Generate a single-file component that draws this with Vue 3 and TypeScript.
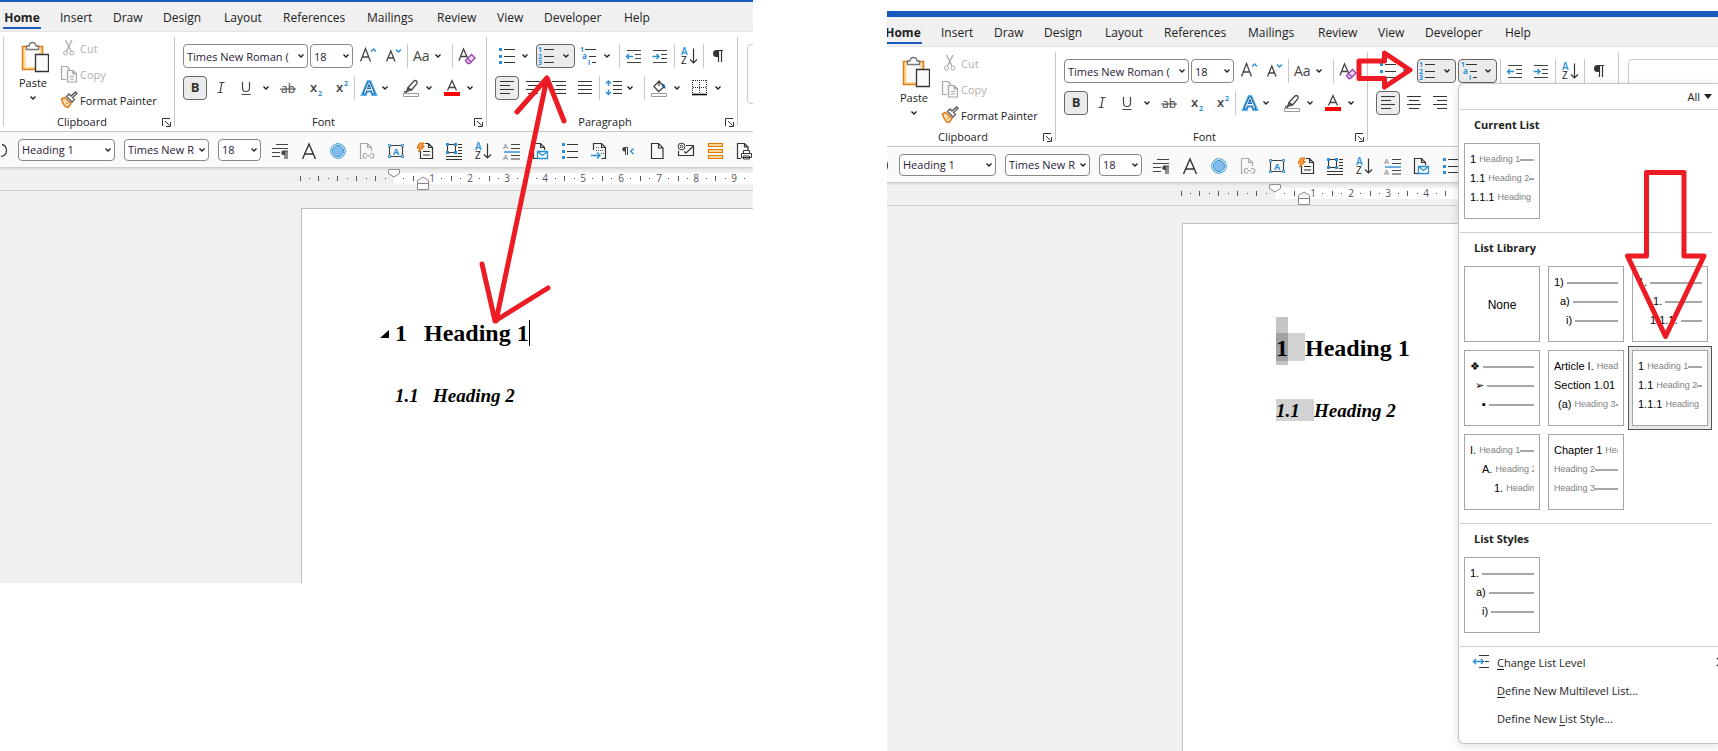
<script setup lang="ts">
interface Tool {
  icon?: string
  label?: string
  width?: number
  gap?: number
  kind?: 'sep' | 'caret'
  pressed?: boolean
}
interface Split { icon: string; label: string; pressed: boolean }
interface Pane { id: string; menuOpen: boolean }
interface Row { indent: number; label: string; text?: string; line?: boolean }
interface Thumb { name: string; rows: Row[]; selected?: boolean }

const panes: Pane[] = [
  { id: 'before', menuOpen: false },
  { id: 'after', menuOpen: true },
]

const tabs = ['Home', 'Insert', 'Draw', 'Design', 'Layout', 'References', 'Mailings', 'Review', 'View', 'Developer', 'Help']

const sep = (gap = 2): Tool => ({ kind: 'sep', gap })
const caret = (label: string, gap = 0): Tool => ({ kind: 'caret', label, gap, width: 8 })
const tool = (icon: string, label: string, gap = 2, width = 24, pressed = false): Tool => ({ icon, label, gap, width, pressed })

const fontTop: Tool[] = [
  tool('grow', 'Increase Font Size', 2, 26),
  tool('shrink', 'Decrease Font Size', 0, 26),
  sep(0),
  tool('case', 'Change Case'),
  caret('Change Case options'),
  sep(10),
  tool('clear', 'Clear Formatting'),
]
const fontBottom: Tool[] = [
  tool('bold', 'Bold', 0, 24, true),
  tool('italic', 'Italic'),
  tool('underline', 'Underline', 1),
  caret('Underline options', 4),
  tool('strike', 'Strikethrough', 4, 28),
  tool('sub', 'Subscript', 0, 28),
  tool('sup', 'Superscript', 0),
  sep(0),
  tool('effects', 'Text Effects'),
  caret('Text Effects options'),
  tool('marker', 'Highlight Color', 10),
  caret('Highlight options', 2),
  tool('fontcolor', 'Font Color', 7),
  caret('Font Color options', 2),
]
const paraTop: Tool[] = [
  sep(1),
  tool('outdent', 'Decrease Indent'),
  tool('indent', 'Increase Indent'),
  sep(),
  tool('sort', 'Sort'),
  sep(),
  tool('pilcrow', 'Show Marks'),
]
const paraBottom: Tool[] = [
  tool('left', 'Align Left', 0, 24, true),
  tool('center', 'Center'),
  tool('right', 'Align Right'),
  tool('justify', 'Justify'),
  sep(),
  tool('spacing', 'Line Spacing'),
  caret('Line Spacing options'),
  sep(10),
  tool('shading', 'Shading'),
  caret('Shading options', 2),
  tool('borders', 'Borders', 7),
  caret('Borders options', 2),
]
const quick = ['marks', 'bigA', 'circle', 'link', 'frame', 'flash', 'wrap', 'sort', 'spread', 'mail', 'bullets', 'export', 'rtl', 'page', 'envelope', 'stack', 'print']

const splits = (open: boolean): Split[] => [
  { icon: 'bullets', label: 'Bullets', pressed: false },
  { icon: 'numbers', label: 'Numbering', pressed: true },
  { icon: 'multi', label: 'Multilevel List', pressed: open },
]

const box = (t: Tool) => ({ width: t.width ? `${t.width}px` : undefined, marginLeft: `${t.gap ?? 0}px` })

const headingRows: Row[] = [
  { indent: 0, label: '1', text: 'Heading 1', line: true },
  { indent: 0, label: '1.1', text: 'Heading 2', line: true },
  { indent: 0, label: '1.1.1', text: 'Heading 3' },
]
const current: Thumb[] = [{ name: 'Current list', rows: headingRows }]
const library: Thumb[] = [
  { name: 'None', rows: [] },
  { name: 'Parentheses', rows: [{ indent: 0, label: '1)', line: true }, { indent: 6, label: 'a)', line: true }, { indent: 12, label: 'i)', line: true }] },
  { name: 'Decimal', rows: [{ indent: 0, label: '1.', line: true }, { indent: 15, label: '1.', line: true }, { indent: 12, label: '1.1.1.', line: true }] },
  { name: 'Symbols', rows: [{ indent: 0, label: '❖', line: true }, { indent: 5, label: '➢', line: true }, { indent: 12, label: '▪', line: true }] },
  { name: 'Article', rows: [{ indent: 0, label: 'Article I.', text: 'Heading 1' }, { indent: 0, label: 'Section 1.01', text: 'Heading 2' }, { indent: 4, label: '(a)', text: 'Heading 3', line: true }] },
  { name: 'Headings', rows: headingRows, selected: true },
  { name: 'Outline', rows: [{ indent: 0, label: 'I.', text: 'Heading 1', line: true }, { indent: 12, label: 'A.', text: 'Heading 2' }, { indent: 24, label: '1.', text: 'Heading 3' }] },
  { name: 'Chapter', rows: [{ indent: 0, label: 'Chapter 1', text: 'Heading 1' }, { indent: 0, label: '', text: 'Heading 2', line: true }, { indent: 0, label: '', text: 'Heading 3', line: true }] },
]
const styles: Thumb[] = [
  { name: 'List style', rows: [{ indent: 0, label: '1.', line: true }, { indent: 6, label: 'a)', line: true }, { indent: 12, label: 'i)', line: true }] },
]
const sections = [
  { title: 'Current List', thumbs: current },
  { title: 'List Library', thumbs: library },
  { title: 'List Styles', thumbs: styles },
]

/* Ruler marks: one every quarter of a centimetre, measured from the margin. */
const ORIGIN = 394
const QUARTER = 9.45
const marks = (last: number) => Array.from({ length: last + 10 }, (_, k) => k - 10)
  .filter((i) => i !== 0)
  .map((i) => ({
    x: Math.round(ORIGIN + QUARTER * i),
    num: i > 0 && i % 4 === 0 ? i / 4 : 0,
    dot: i % 2 !== 0,
  }))
</script>

<template>
  <svg class="defs" aria-hidden="true">
    <symbol id="chev" viewBox="0 0 8 8"><path d="M1.500 2.500 4 5l2.500-2.500" fill="none" stroke="#222" stroke-width="1.400" /></symbol>
    <symbol id="grow" viewBox="0 0 20 20"><path d="M2.500 15.500 7.500 2.500 12.500 15.500M4.300 11h6.400" fill="none" stroke="#444" stroke-width="1.300" /><path d="M13 5.500 15.500 3 18 5.500" fill="none" stroke="#2b8fd6" stroke-width="1.400" /></symbol>
    <symbol id="shrink" viewBox="0 0 20 20"><path d="M2.500 15.500 6.800 5 11 15.500M4 12h5.500" fill="none" stroke="#444" stroke-width="1.300" /><path d="M12 3.500 14.500 6 17 3.500" fill="none" stroke="#2b8fd6" stroke-width="1.400" /></symbol>
    <symbol id="case" viewBox="0 0 20 20"><text x="1" y="15" font-size="14" fill="#444">Aa</text></symbol>
    <symbol id="clear" viewBox="0 0 20 20"><path d="M2 14.500 6.500 3 11 13M3.800 10.500h5.500" fill="none" stroke="#444" stroke-width="1.300" /><path d="m8.500 14.500 6-6 3.500 3.500-5.500 5.500h-1.500zM10.500 12.500l3.500 3.500" fill="#f1def5" stroke="#9b3fb0" stroke-width="1.400" /></symbol>
    <symbol id="bold" viewBox="0 0 20 20"><text x="10" y="14" font-size="13" font-weight="700" text-anchor="middle" fill="#333">B</text></symbol>
    <symbol id="italic" viewBox="0 0 20 20"><path d="M8.500 4.500h5M6.500 14.500h5M11 4.500 9 14.500" fill="none" stroke="#444" stroke-width="1.200" /></symbol>
    <symbol id="underline" viewBox="0 0 20 20"><path d="M6.500 4v6a3.500 3.500 0 0 0 7 0V4M5.500 16.500h9" fill="none" stroke="#444" stroke-width="1.200" /></symbol>
    <symbol id="strike" viewBox="0 0 20 20"><text x="10" y="15" font-size="12" text-anchor="middle" fill="#444">ab</text><path d="M2 11h16" stroke="#444" /></symbol>
    <symbol id="sub" viewBox="0 0 20 20"><text x="4" y="14" font-size="13" font-weight="600" fill="#444">x</text><text x="12" y="18" font-size="7" font-weight="700" fill="#2b8fd6">2</text></symbol>
    <symbol id="sup" viewBox="0 0 20 20"><text x="4" y="14" font-size="13" font-weight="600" fill="#444">x</text><text x="12" y="8" font-size="7" font-weight="700" fill="#2b8fd6">2</text></symbol>
    <symbol id="effects" viewBox="0 0 20 20"><path d="M3.500 16.500 9 3.500h2l5.500 13h-3l-1.200-3.500H7.700L6.500 16.500z" fill="#fff" stroke="#5db4ec" stroke-width="3" /><path d="M4 16 9 4h2l5 12h-2.500l-1.200-3H7.700L6.500 16zM8.500 10.500h3L10 6.500z" fill="#fff" stroke="#1266ad" stroke-width="1.100" /></symbol>
    <symbol id="marker" viewBox="0 0 20 20"><path d="m7 9.500 6-6.500q1.500-1 2.700.200 1 1.300 0 2.600L10.500 12zM7 9.500l-1.500 4 5-1.500M3 14h3" fill="none" stroke="#444" stroke-width="1.300" /><path d="m7 10-1.500 3.500L10 12z" fill="#555" /><path d="M2.500 15.500h15v3h-15z" fill="#fff" stroke="#999" /></symbol>
    <symbol id="fontcolor" viewBox="0 0 20 20"><path d="M5.500 12.500 10 2.500l4.500 10M7 9.500h6" fill="none" stroke="#444" stroke-width="1.300" /><path d="M2 14h16v4H2z" fill="#f00" /></symbol>
    <symbol id="bullets" viewBox="0 0 20 20"><path d="M2 2h3v3H2zM2 9h3v3H2zM2 15h3v3H2z" fill="#2b8fd6" /><path d="M7 3.500h11M7 10.500h11M7 16.500h11" stroke="#333" stroke-width="1.200" /></symbol>
    <symbol id="numbers" viewBox="0 0 20 20"><g font-size="7" font-weight="700" fill="#2b8fd6"><text x="0" y="6">1</text><text x="0" y="13">2</text><text x="0" y="19">3</text></g><path d="M6 3.500h10M6 10.500h10M6 16.500h10" stroke="#333" stroke-width="1.200" /></symbol>
    <symbol id="multi" viewBox="0 0 20 20"><g font-size="7" font-weight="700" fill="#2b8fd6"><text x="1" y="6">1</text><text x="3" y="13" font-size="8">a</text><text x="9" y="19">i</text></g><path d="M6 3.500h11M10 10.500h7M13 16.500h4" stroke="#333" stroke-width="1.200" /></symbol>
    <symbol id="outdent" viewBox="0 0 20 20"><path d="M3 4.500h14M11 8.500h6M11 12.500h6M3 16.500h14" stroke="#444" stroke-width="1.200" /><path d="M2.500 10.500H9M5 8l-2.500 2.500L5 13" fill="none" stroke="#2b8fd6" stroke-width="1.400" /></symbol>
    <symbol id="indent" viewBox="0 0 20 20"><path d="M3 4.500h14M11 8.500h6M11 12.500h6M3 16.500h14" stroke="#444" stroke-width="1.200" /><path d="M2.500 10.500H9M6.500 8 9 10.500 6.500 13" fill="none" stroke="#2b8fd6" stroke-width="1.400" /></symbol>
    <symbol id="sort" viewBox="0 0 20 20"><text x="2" y="9" font-size="10" font-weight="600" fill="#2b8fd6">A</text><text x="2" y="18" font-size="10" fill="#222">Z</text><path d="M14.500 2.500v14.500M11 13.500l3.500 3.500 3.500-3.500" fill="none" stroke="#333" stroke-width="1.200" /></symbol>
    <symbol id="pilcrow" viewBox="0 0 20 20"><path d="M15 4.500H9M10.500 4v12M13.500 4v12" fill="none" stroke="#333" stroke-width="1.200" /><path d="M10 4H8.500a3.500 3.500 0 0 0 0 7H10z" fill="#333" /></symbol>
    <symbol id="left" viewBox="0 0 20 20"><path d="M3 3.500h14M3 7.500h10M3 11.500h14M3 15.500h10" stroke="#333" stroke-width="1.200" /></symbol>
    <symbol id="center" viewBox="0 0 20 20"><path d="M3 3.500h14M5 7.500h10M3 11.500h14M5 15.500h10" stroke="#333" stroke-width="1.200" /></symbol>
    <symbol id="right" viewBox="0 0 20 20"><path d="M3 3.500h14M7 7.500h10M3 11.500h14M7 15.500h10" stroke="#333" stroke-width="1.200" /></symbol>
    <symbol id="justify" viewBox="0 0 20 20"><path d="M3 3.500h14M3 7.500h14M3 11.500h14M3 15.500h14" stroke="#333" stroke-width="1.200" /></symbol>
    <symbol id="spacing" viewBox="0 0 20 20"><path d="M9 3.500h9M9 7.500h9M9 11.500h9M9 15.500h9" stroke="#333" stroke-width="1.200" /><path d="M4.500 3v5M4.500 11.500v5M2 5.500 4.500 3 7 5.500M2 14l2.500 2.500L7 14" fill="none" stroke="#2b8fd6" stroke-width="1.400" /></symbol>
    <symbol id="shading" viewBox="0 0 20 20"><path d="m5 8.500 5-5.500 5 6-5.500 4.500zM10 3v5" fill="none" stroke="#444" stroke-width="1.300" /><path d="M13 5.500q3.500 0 3.500 6-1.500-3-3.500-3z" fill="#1266ad" /><path d="M2.500 15.500h15v3h-15z" fill="#fff" stroke="#999" /></symbol>
    <symbol id="borders" viewBox="0 0 20 20"><path d="M3 2.500h14M3 9.500h14M2.500 2v14M9.500 2v14M16.500 2v14" stroke="#333" stroke-dasharray="1 1" /><path d="M2 16.500h15" stroke="#000" stroke-width="1.600" /></symbol>
    <symbol id="marks" viewBox="0 0 20 20"><path d="M6 3.500h12M2 7.500h16M2 11.500h8M2 15.500h8M18 10h-3.500M15 10v8M17 10v8" stroke="#444" stroke-width="1.200" /><path d="M15 9.500h-1.500a2 2 0 0 0 0 4.500H15z" fill="#444" /></symbol>
    <symbol id="bigA" viewBox="0 0 20 20"><path d="M3.500 18 10 3l6.500 15M6 13h8" fill="none" stroke="#333" stroke-width="1.400" /></symbol>
    <symbol id="circle" viewBox="0 0 20 20"><circle cx="10" cy="10" r="7.300" fill="#fff" stroke="#2b8fd6" stroke-width="1" /><circle cx="10" cy="10" r="5.500" fill="#84bdee" stroke="#2b8fd6" /></symbol>
    <symbol id="link" viewBox="0 0 20 20"><path d="M5 17.500H3.500v-15h7l4 4V10M10.500 2.500v4h4" fill="none" stroke="#aaa" stroke-width="1.200" /><path d="M10 12.500H8.500a2.200 2.200 0 0 0 0 4.500H10M13 12.500h1.500a2.200 2.200 0 0 1 0 4.500H13M9.500 14.700h4" fill="none" stroke="#aaa" stroke-width="1.200" /></symbol>
    <symbol id="frame" viewBox="0 0 20 20"><path d="M3.500 4.500h13v11h-13z" fill="none" stroke="#444" stroke-width="1.200" /><path d="M2.500 3.500h2v2h-2zM15.500 3.500h2v2h-2zM2.500 14.500h2v2h-2zM15.500 14.500h2v2h-2z" fill="#fff" stroke="#2b8fd6" /><text x="10" y="13.500" font-size="9" font-weight="700" text-anchor="middle" fill="#2b8fd6">A</text></symbol>
    <symbol id="flash" viewBox="0 0 20 20"><path d="M5.500 10v7.500h12v-11l-4-4H10M13.500 2.500v4h4M8 10.500h7M8 14h7" fill="none" stroke="#333" stroke-width="1.200" /><path d="M4.500 2H9L7 5.500h2.500L3.500 11l1.300-4H2z" fill="#f6a04d" stroke="#e06c00" /></symbol>
    <symbol id="wrap" viewBox="0 0 20 20"><path d="M14 3.500h4M14 6.500h4M14 9.500h4M14 12.500h4M2 15.500h16M2 18.500h16" stroke="#333" stroke-width="1.200" /><path d="M3.500 3.500h8v8h-8z" fill="#fff" stroke="#333" /><path d="M2 2h3v3H2zM10 2h3v3h-3zM2 10h3v3H2zM10 10h3v3h-3z" fill="#2b8fd6" /></symbol>
    <symbol id="spread" viewBox="0 0 20 20"><g font-size="8" fill="#777"><text x="1" y="8">A</text><text x="1" y="19">A</text></g><path d="M9 3.500h9M9 7.500h9M9 14.500h9M9 18h9" stroke="#444" stroke-width="1.200" /><path d="M2 11h16" stroke="#2b8fd6" stroke-width="1.400" /></symbol>
    <symbol id="mail" viewBox="0 0 20 20"><path d="M6 17.500H2.500v-15h7l4 4V9M9.500 2.500v4h4" fill="none" stroke="#333" stroke-width="1.200" /><path d="M6.500 10.500h10v7h-10zl5 4 5-4" fill="#fff" stroke="#2b8fd6" stroke-width="1.300" /></symbol>
    <symbol id="export" viewBox="0 0 20 20"><path d="M4.500 9V2.500h8l4 4v11h-4M12.500 2.500v4h4" fill="none" stroke="#333" stroke-width="1.200" /><path d="M7 6.500h4M7 9.500h7M12 12.500h3" stroke="#555" stroke-dasharray="1 1" /><path d="M2 14.500h9M8 11.500l3 3-3 3" fill="none" stroke="#2b8fd6" stroke-width="1.400" /></symbol>
    <symbol id="rtl" viewBox="0 0 20 20"><path d="M10 6.500H7M7.500 6v8M9.500 6v8" stroke="#444" /><path d="M7.500 6H6.500a2 2 0 0 0 0 4.500h1z" fill="#444" /><path d="m15.500 7.500-2.800 2.800 2.800 2.800" fill="none" stroke="#2b8fd6" stroke-width="1.400" /></symbol>
    <symbol id="page" viewBox="0 0 20 20"><path d="M4.500 2.500h7l4.500 4.500v10.500H4.500zM11.500 2.500V7H16" fill="none" stroke="#333" stroke-width="1.200" /></symbol>
    <symbol id="envelope" viewBox="0 0 20 20"><path d="M10 4.500h7.500v10h-15V10M8 10.500l2 1.500 7.500-7" fill="none" stroke="#333" stroke-width="1.200" /><circle cx="5.500" cy="5.500" r="3.400" fill="#fff" stroke="#333" /><circle cx="5.500" cy="5.500" r="1.300" fill="none" stroke="#333" /></symbol>
    <symbol id="stack" viewBox="0 0 20 20"><path d="M3.500 2.500h14v3h-14zM3.500 8.500h14v3h-14zM3.500 14.500h14v3h-14z" fill="#fbd99c" stroke="#e07b00" stroke-width="1.200" /></symbol>
    <symbol id="print" viewBox="0 0 20 20"><path d="M7 17.500H3.500v-15h7l3.500 3.500v3M10.500 2.500V6H14" fill="none" stroke="#333" stroke-width="1.200" /><path d="M7.500 12.500h10v4h-10zM9.500 9.500h6v3h-6zM9.500 15h6v3h-6z" fill="#fff" stroke="#333" /></symbol>
    <symbol id="launcher" viewBox="0 0 9 9"><path d="M.5 8V.5H8M3 3l4.500 4.500M8.500 4v4.500H4" fill="none" stroke="#333" /></symbol>
    <symbol id="cut" viewBox="0 0 18 18"><path d="M5.500 1 11 12M12 1 6.500 12" fill="none" stroke="#aaa" stroke-width="1.300" /><circle cx="5.500" cy="14" r="2" fill="none" stroke="#aaa" /><circle cx="12" cy="14" r="2" fill="none" stroke="#aaa" /></symbol>
    <symbol id="copy" viewBox="0 0 18 18"><path d="M6 14.500H1.500v-13H7l3 3M7.500 5.500H13l3.500 3.500v8h-9zM13 5.500V9h3.500M10 11.500h4M10 14h4" fill="#fafafa" stroke="#a5a5a5" stroke-width="1.200" /></symbol>
    <symbol id="brush" viewBox="0 0 18 18"><path d="m1.500 8 3-1.500 6.500 6L8 16.500q-4 0-6.500-8.500z" fill="#fde3bd" stroke="#e07b1a" stroke-width="1.500" /><path d="m5.500 13 3-1.500" stroke="#e07b1a" /><path d="m6.500 5.500 5.500 5.500 2.500-2.500-2-2L17 2.500 15.500 1l-4.500 4-2-2z" fill="#fff" stroke="#555" stroke-width="1.300" /></symbol>
    <symbol id="paste" viewBox="0 0 28 32"><path d="M1.500 5.500h20v23h-20z" fill="#fbd893" stroke="#e07b1a" stroke-width="1.500" /><path d="M4.500 8h14v18h-14z" fill="#fafafa" /><path d="M5.500 8.500V5H8q.5-3.500 3.500-3.500T15 5h2.500v3.500z" fill="#fff" stroke="#777" stroke-width="1.300" /><path d="M14.500 13.500h13v17h-13z" fill="#fafafa" stroke="#333" stroke-width="1.300" /></symbol>
    <symbol id="level" viewBox="0 0 18 18"><path d="M7 2.500h10M13 8.500h4M7 14.500h10" stroke="#333" stroke-width="1.200" /><path d="M1.500 8.500h10M4 6 1.500 8.500 4 11M9 6l2.500 2.500L9 11" fill="none" stroke="#2b8fd6" stroke-width="1.300" /></symbol>
  </svg>

  <main class="stage">
    <section v-for="p in panes" :key="p.id" class="pane" :class="p.id">
      <div class="window">
        <div class="titlebar"></div>
        <nav class="tabs">
          <button v-for="t in tabs" :key="t" type="button" :class="{ active: t === 'Home' }">{{ t }}</button>
        </nav>

        <div class="ribbon">
          <span class="vsep first"></span>
          <div class="group clipboard">
            <div class="clip-body">
              <button type="button" class="paste">
                <svg class="paste-icon"><use href="#paste" /></svg>
                <span>Paste</span>
                <svg class="chev"><use href="#chev" /></svg>
              </button>
              <div class="clip-list">
                <button type="button" class="off"><svg class="i18"><use href="#cut" /></svg>Cut</button>
                <button type="button" class="off"><svg class="i18"><use href="#copy" /></svg>Copy</button>
                <button type="button"><svg class="i18"><use href="#brush" /></svg>Format Painter</button>
              </div>
            </div>
            <div class="caption"><span>Clipboard</span><svg class="launcher"><use href="#launcher" /></svg></div>
          </div>
          <span class="vsep"></span>

          <div class="group font">
            <div class="line">
              <label class="combo w125"><select aria-label="Font"><option>Times New Roman (</option></select><svg class="chev"><use href="#chev" /></svg></label>
              <label class="combo w43 near"><select aria-label="Font size"><option>18</option></select><svg class="chev"><use href="#chev" /></svg></label>
              <template v-for="(t, i) in fontTop" :key="i">
                <span v-if="t.kind === 'sep'" class="sep" :style="box(t)"></span>
                <button v-else type="button" class="tool" :style="box(t)" :aria-label="t.label">
                  <svg :class="t.kind === 'caret' ? 'chev' : 'i20'"><use :href="t.kind === 'caret' ? '#chev' : '#' + t.icon" /></svg>
                </button>
              </template>
            </div>
            <div class="line">
              <template v-for="(t, i) in fontBottom" :key="i">
                <span v-if="t.kind === 'sep'" class="sep" :style="box(t)"></span>
                <button v-else type="button" class="tool" :class="{ pressed: t.pressed }" :style="box(t)" :aria-label="t.label">
                  <svg :class="t.kind === 'caret' ? 'chev' : 'i20'"><use :href="t.kind === 'caret' ? '#chev' : '#' + t.icon" /></svg>
                </button>
              </template>
            </div>
            <div class="caption"><span>Font</span><svg class="launcher"><use href="#launcher" /></svg></div>
          </div>
          <span class="vsep"></span>

          <div class="group paragraph">
            <div class="line">
              <button v-for="s in splits(p.menuOpen)" :key="s.icon" type="button" class="split" :class="{ pressed: s.pressed }" :aria-label="s.label">
                <svg class="i20"><use :href="'#' + s.icon" /></svg><svg class="chev"><use href="#chev" /></svg>
              </button>
              <template v-for="(t, i) in paraTop" :key="i">
                <span v-if="t.kind === 'sep'" class="sep" :style="box(t)"></span>
                <button v-else type="button" class="tool" :style="box(t)" :aria-label="t.label"><svg class="i20"><use :href="'#' + t.icon" /></svg></button>
              </template>
            </div>
            <div class="line">
              <template v-for="(t, i) in paraBottom" :key="i">
                <span v-if="t.kind === 'sep'" class="sep" :style="box(t)"></span>
                <button v-else type="button" class="tool" :class="{ pressed: t.pressed }" :style="box(t)" :aria-label="t.label">
                  <svg :class="t.kind === 'caret' ? 'chev' : 'i20'"><use :href="t.kind === 'caret' ? '#chev' : '#' + t.icon" /></svg>
                </button>
              </template>
            </div>
            <div class="caption"><span v-if="!p.menuOpen">Paragraph</span><svg v-if="!p.menuOpen" class="launcher"><use href="#launcher" /></svg></div>
          </div>
          <span class="vsep"></span>
          <div class="gallery"></div>
        </div>

        <div class="quick">
          <svg class="redo" viewBox="0 0 10 20" aria-hidden="true"><path d="M2 4.500q4.500 1 4.500 6T1 16.500" fill="none" stroke="#444" stroke-width="1.300" /></svg>
          <label class="combo w97"><select aria-label="Style"><option>Heading 1</option></select><svg class="chev"><use href="#chev" /></svg></label>
          <label class="combo w85"><select aria-label="Font name"><option>Times New R</option></select><svg class="chev"><use href="#chev" /></svg></label>
          <label class="combo w43"><select aria-label="Size"><option>18</option></select><svg class="chev"><use href="#chev" /></svg></label>
          <div class="quick-icons">
            <button v-for="q in quick" :key="q" type="button" :aria-label="q"><svg class="i20"><use :href="'#' + q" /></svg></button>
          </div>
        </div>

        <div class="ruler">
          <svg aria-hidden="true">
            <rect x="394" y="4" width="2000" height="11" fill="#fff" />
            <template v-for="m in marks(p.menuOpen ? 19 : 38)" :key="m.x">
              <text v-if="m.num" :x="m.x" y="13" text-anchor="middle" font-size="10" fill="#555">{{ m.num }}</text>
              <rect v-else-if="m.dot" :x="m.x" y="9" width="1" height="1" fill="#555" />
              <rect v-else :x="m.x" y="7" width="1" height="5" fill="#555" />
            </template>
            <path d="M388.500.5h11v4l-5.500 3.500-5.500-3.500z" fill="#fff" stroke="#888" />
            <path d="M417.500 20.500v-9l5.500-3.500 5.500 3.500v9zM417.500 14.500h11" fill="#fff" stroke="#888" />
          </svg>
        </div>

        <div class="desk">
          <article class="page">
            <h1>
              <svg v-if="!p.menuOpen" class="fold" viewBox="0 0 9 8" aria-hidden="true"><path d="M9 0v8H0z" /></svg>
              <span class="num" :class="{ field: p.menuOpen }"><i v-if="p.menuOpen" class="picked"></i><b>1</b></span>Heading 1<i v-if="!p.menuOpen" class="cursor"></i>
            </h1>
            <h2><span class="num" :class="{ field: p.menuOpen }">1.1</span>Heading 2</h2>
          </article>
        </div>
      </div>

      <div v-if="p.menuOpen" class="menu">
        <button type="button" class="all">All<svg viewBox="0 0 8 5"><path d="M0 0h8L4 5z" fill="#222" /></svg></button>
        <section v-for="s in sections" :key="s.title" class="block">
          <h3>{{ s.title }}</h3>
          <div class="thumbs">
            <button v-for="t in s.thumbs" :key="t.name" type="button" class="thumb" :class="{ selected: t.selected }" :aria-label="t.name">
              <span v-if="!t.rows.length" class="none">None</span>
              <span v-for="(r, i) in t.rows" :key="i" class="trow" :style="{ paddingLeft: r.indent + 'px' }">
                <span v-if="r.label" class="tnum">{{ r.label }}</span>
                <span v-if="r.text" class="ttext">{{ r.text }}</span>
                <span v-if="r.line" class="tline"></span>
              </span>
            </button>
          </div>
        </section>
        <div class="commands">
          <button type="button"><svg class="i18"><use href="#level" /></svg><span><u>C</u>hange List Level</span><svg class="more" viewBox="0 0 6 10"><path d="m1 1 4 4-4 4" fill="none" stroke="#333" stroke-width="1.300" /></svg></button>
          <button type="button"><span><u>D</u>efine New Multilevel List...</span></button>
          <button type="button"><span>Define New <u>L</u>ist Style...</span></button>
        </div>
      </div>

      <svg v-if="!p.menuOpen" class="ink" aria-hidden="true"><path d="M517 112 547 78 564 121M547 78 496 321M482 264 495 321 548 288" /></svg>
      <svg v-else class="ink" aria-hidden="true">
        <path d="M472 50h25.500v-8L523 59l-25.500 17v-8.500H472z" />
        <path d="M759.500 161.500h37.500V245h20l-38.500 80.500-38-80.500h19z" />
      </svg>
    </section>
  </main>
</template>

<style>
body { background: #fff; }
</style>

<style scoped>
.defs { display: none; }
.stage {
  display: grid;
  grid-template-columns: 753fr 831fr;
  column-gap: 134px;
  min-height: 100vh;
  overflow: hidden;
  font-family: "Open Sans", "Noto Sans", sans-serif;
  font-size: 11px;
  color: #222;
}
button { font: inherit; color: inherit; background: none; border: 0; padding: 0; margin: 0; }
.pane { position: relative; min-width: 0; display: flex; }
.before { margin-bottom: 168px; }
.after { margin-top: 11px; overflow: hidden; }
.window { flex: 1; min-width: 0; display: flex; flex-direction: column; overflow: hidden; background: #f0f0f0; }
.before .window { min-height: 583px; }
.titlebar { height: 2px; background: #185abd; flex: none; }
.after .titlebar { height: 6px; }
.after .tabs, .after .ribbon, .after .quick, .after .ruler, .after .desk { margin-left: -6px; }

.tabs {
  display: grid;
  grid-template-columns: 57px 53px 50px 61px 59px 84px 70px 60px 47px 80px auto;
  height: 29px;
  padding-left: 3px;
  border-bottom: 1px solid #e4e4e4;
  font-size: 12px;
  flex: none;
}
.tabs button { justify-self: start; height: 27px; line-height: 23px; padding-top: 4px; box-sizing: border-box; white-space: nowrap; }
.tabs .active { font-weight: 700; border-bottom: 2px solid #185abd; width: 38px; }

.ribbon { display: flex; height: 94px; padding-top: 5px; background: #fff; border-bottom: 1px solid #c8c8c8; flex: none; white-space: nowrap; }
.vsep { width: 1px; height: 89px; background: #c8c8c8; flex: none; }
.vsep.first { margin-left: 3px; }
.group { box-sizing: border-box; flex: none; display: flex; flex-direction: column; padding: 7px 8px 0; gap: 8px; }
.clipboard { width: 170px; padding: 4px 0 0; gap: 0; }
.font { width: 311px; }
.paragraph { width: 250px; }
.line { display: flex; height: 24px; }
.caption { position: relative; height: 14px; line-height: 14px; margin-top: 7px; padding-right: 14px; text-align: center; }
.clipboard .caption { margin-top: 0; }
.launcher { position: absolute; right: -5px; top: 3px; width: 9px; height: 9px; }
.clipboard .launcher { right: 3px; }
.clip-body { display: flex; height: 74px; }
.paste { width: 56px; display: flex; flex-direction: column; align-items: center; padding-left: 2px; line-height: 20px; }
.paste-icon { width: 28px; height: 32px; margin-left: 4px; }
.paste .chev { margin-top: 1px; }
.clip-list { display: flex; flex-direction: column; margin-top: -6px; }
.clip-list button { display: flex; align-items: center; height: 26px; gap: 2px; flex: none; }
.off { color: #b0b0b0; }
.i20 { width: 20px; height: 20px; flex: none; display: block; }
.i18 { width: 18px; height: 18px; flex: none; display: block; }
.chev { width: 8px; height: 8px; flex: none; display: block; }
.sep { width: 1px; height: 24px; background: #c8c8c8; flex: none; }
.tool { display: flex; align-items: center; justify-content: center; height: 24px; flex: none; box-sizing: border-box; }
.split { display: flex; align-items: center; width: 39px; height: 24px; gap: 4px; box-sizing: border-box; border: 1px solid transparent; padding-left: 1px; margin-right: 2px; flex: none; }
.pressed { background: #ebebeb; border: 1px solid #666; border-radius: 4px; }
.combo { position: relative; display: block; box-sizing: border-box; height: 24px; border: 1px solid #888; border-radius: 4px; background: #fff; flex: none; }
.combo select { appearance: none; width: 100%; height: 100%; border: 0; margin: 0; padding: 0 0 0 3px; background: none; font: inherit; color: #2a2038; outline: 0; }
.combo .chev { position: absolute; right: 2px; top: 50%; margin-top: -4px; }
.near { margin-left: 2px; }
.w125 { width: 125px; }
.w97 { width: 97px; }
.w85 { width: 85px; }
.w43 { width: 43px; }
.gallery { flex: 1; height: 58px; margin: 7px -4px 0 9px; border: 1px solid #c8c8c8; border-radius: 4px; }

.quick { display: flex; align-items: center; height: 35px; background: #fafafa; box-shadow: 0 1px 3px #bbb; flex: none; position: relative; }
.redo { width: 10px; height: 20px; flex: none; }
.quick .combo { height: 22px; margin-left: 9px; }
.quick .w97 { margin-left: 8px; }
.quick-icons { display: flex; gap: 1px; padding: 3px 0 0 5px; }
.quick-icons button { width: 28px; display: flex; justify-content: center; flex: none; }

.ruler { height: 23px; border-bottom: 1px solid #d0d0d0; flex: none; }
.ruler svg { display: block; width: 100%; height: 23px; padding-top: 2px; box-sizing: border-box; overflow: hidden; }

.desk { flex: 1; display: flex; padding: 17px 0 0 301px; }
.page { flex: 1; background: #fff; border: solid #c0c0c0; border-width: 1px 0 0 1px; padding: 109px 0 0 93px; font-family: "Liberation Serif", "Times New Roman", serif; color: #000; white-space: nowrap; }
h1, h2, h3 { margin: 0; }
h1 { position: relative; font-size: 24px; height: 28px; line-height: 30px; display: flex; }
h2 { font-size: 19px; height: 22px; line-height: 24px; margin-top: 38px; font-style: italic; display: flex; }
.num { position: relative; width: 29px; flex: none; }
h2 .num { width: 38px; }
.num b { position: relative; }
.field { background: #d2d2d2; }
.picked { position: absolute; left: 0; top: -16px; width: 12px; height: 48px; background: #c5c5c5; }
.picked::after { content: ""; position: absolute; left: 0; top: 16px; width: 12px; height: 28px; background: #a2a2a2; }
.fold { position: absolute; left: -15px; top: 12px; width: 9px; height: 8px; }
.cursor { width: 1px; height: 26px; margin-top: 2px; background: #000; }

.menu {
  position: absolute;
  left: 571px;
  right: 0;
  top: 72px;
  height: 659px;
  background: #fff;
  border: 1px solid #c4c4c4;
  border-right: 0;
  border-radius: 6px 0 0 6px;
  box-shadow: 0 2px 10px #0002;
  display: flex;
  flex-direction: column;
}
.all { display: flex; align-items: center; justify-content: flex-end; gap: 4px; height: 26px; padding-right: 6px; margin-left: 1px; border-bottom: 1px solid #d0d0d0; flex: none; }
.all svg { width: 8px; height: 5px; }
.block { margin: 0 6px 0 1px; border-bottom: 1px solid #d0d0d0; padding: 6px 0 13px 4px; flex: none; }
.block:last-of-type { margin-right: 0; }
h3 { font-size: 11px; line-height: 18px; padding: 0 0 0 10px; margin-bottom: 9px; font-weight: 700; }
.thumbs { display: grid; grid-template-columns: repeat(3, 76px); gap: 8px; }
.thumb { width: 76px; height: 76px; box-sizing: border-box; border: 1px solid #a6a6a6; background: #fff; padding: 6px 5px 0; font-family: "Liberation Sans", Arial, sans-serif; color: #000; display: flex; flex-direction: column; text-align: left; }
.selected { outline: 1px solid #555; outline-offset: 3px; box-shadow: 0 0 0 3px #e8e8e8; }
.none { margin: 23px auto 0; line-height: 18px; font-size: 12px; }
.trow { display: flex; align-items: center; height: 19px; gap: 3px; overflow: hidden; white-space: nowrap; flex: none; }
.tnum { font-size: 11px; line-height: 19px; flex: none; }
.ttext { font-size: 9px; color: #808080; line-height: 19px; flex: none; }
.tline { flex: 1; height: 2px; background: #a6a6a6; }
.ttext + .tline { margin-left: -3px; }
.commands { display: flex; flex-direction: column; padding-top: 1px; }
.commands button { display: flex; align-items: center; height: 28px; padding-left: 38px; }
.commands .i18 { margin: 0 7px 0 -25px; }
.commands .more { width: 6px; height: 10px; margin: 0 -4px 0 auto; }
.commands u { text-underline-offset: 2px; }
.ink { position: absolute; inset: 0; width: 100%; height: 100%; pointer-events: none; overflow: hidden; }
.ink path { fill: none; stroke: #ed1c24; stroke-width: 5px; stroke-linejoin: round; stroke-linecap: round; }
</style>
